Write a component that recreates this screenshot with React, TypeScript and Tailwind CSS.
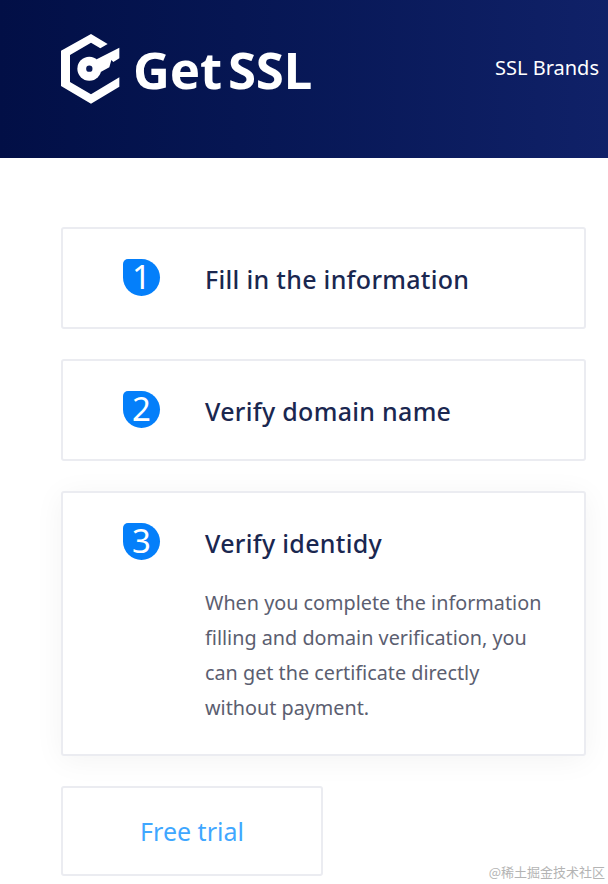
const font = { fontFamily: '"Noto Sans", "Open Sans", sans-serif' };

function Logo() {
  return (
    <svg width="72" height="78" viewBox="0 0 216 234" className="shrink-0">
      <path
        d="M105 12 L155 42 L133 55 L105 38 L42 75 V156 L105 193 L190 142 V170 L105 221 L15 168 V62 Z"
        fill="#fff"
      />
      <path d="M122 88 L190 53 V85 L172 96 L166 90 L160 112 L134 126 Z" fill="#fff" />
      <circle cx="100" cy="116" r="36" fill="#fff" />
      <circle cx="100" cy="116" r="9.5" fill="#0a1a58" />
    </svg>
  );
}

function Step({ n, title, children }: { n: number; title: string; children?: React.ReactNode }) {
  return (
    <div className={`flex rounded-[3px] border-2 border-[#ebecf1] bg-white pt-[30px] pr-[30px] pb-[28px] pl-[60px] ${children ? "shadow-[0_4px_30px_rgba(0,0,0,0.05)]" : ""}`}>
      <div className="flex h-[37px] w-[37px] shrink-0 items-center justify-center rounded-[18.5px] rounded-tl-[5px] bg-[#047ffa] pb-[2px] text-[33px] leading-none text-white">
        {n}
      </div>
      <div className="ml-[45px] min-w-0">
        <h3 className="text-[25px] leading-[40px] font-medium tracking-[0.3px] text-[#1a2750]">{title}</h3>
        {children}
      </div>
    </div>
  );
}

export default function App() {
  return (
    <div className="relative h-[884px] w-[608px] overflow-hidden bg-white" style={font}>
      <header className="flex h-[158px] items-center justify-between bg-gradient-to-r from-[#020f46] to-[#102168] pb-[20px] pl-[56px]">
        <div className="flex items-center gap-[5px]">
          <Logo />
          <span className="text-[51px] leading-none font-bold tracking-[-0.2px] [word-spacing:-7px] text-white">Get SSL</span>
        </div>
        <a className="mr-[9px] mb-[2px] text-[20px] text-white">SSL Brands</a>
      </header>

      <main className="flex flex-col gap-[30px] pt-[69px] pr-[22px] pl-[61px]">
        <Step n={1} title="Fill in the information" />
        <Step n={2} title="Verify domain name" />
        <Step n={3} title="Verify identidy">
          <p className="mt-[22px] mb-[1px] text-[19.8px] leading-[35px] text-[#5b5e70]">
            When you complete the information filling and domain verification, you can get the certificate directly without payment.
          </p>
        </Step>
        <button className="h-[90px] w-[262px] rounded-[3px] border-2 border-[#ebecf1] bg-white pt-[2px] text-[25px] text-[#3fa7ff]">
          Free trial
        </button>
      </main>

      <span
        className="absolute right-[3px] bottom-[3px] text-[13px] text-[#b4b4b4]"
        style={{ fontFamily: '"Noto Sans CJK SC", "Noto Sans", sans-serif' }}
      >
        @稀土掘金技术社区
      </span>
    </div>
  );
}
